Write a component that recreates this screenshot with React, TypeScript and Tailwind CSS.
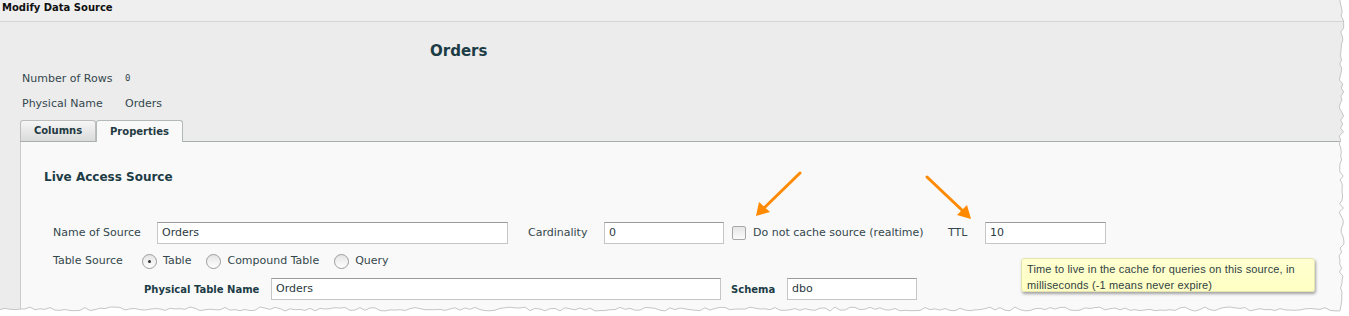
import React from 'react'

// deterministic jitter for the torn paper edge
function jitter(i: number) {
  const s = Math.sin(i * 12.9898 + 78.233) * 43758.5453
  return s - Math.floor(s)
}

function tornEdge() {
  const pts: string[] = []
  for (let y = 0; y <= 306; y += 4) {
    pts.push(`${(1341 + jitter(y) * 5 - 2).toFixed(1)},${y}`)
  }
  for (let x = 1340; x >= 0; x -= 5) {
    pts.push(`${x},${(308 + jitter(x + 900) * 4 - 1).toFixed(1)}`)
  }
  return pts
}

function TextInput({ value, className }: { value: string; className: string }) {
  return (
    <div
      className={`h-[22px] bg-white border border-[#c6c6c6] border-t-[#9a9a9a] pl-[4px] text-[11px] leading-[20px] text-[#2b3a3e] ${className}`}
    >
      {value}
    </div>
  )
}

function Radio({ checked, label }: { checked?: boolean; label: string }) {
  return (
    <div className="flex items-center">
      <span className="w-[15px] h-[15px] rounded-full border border-[#9c9c9c] bg-gradient-to-b from-[#e4e4e4] to-white flex items-center justify-center">
        {checked && <span className="w-[3px] h-[3px] rounded-full bg-[#333]" />}
      </span>
      <span className="ml-[6px]">{label}</span>
    </div>
  )
}

export default function App() {
  const edge = tornEdge()
  return (
    <div className="relative w-[1349px] h-[316px] bg-white overflow-hidden font-['DejaVu_Sans',sans-serif] text-[11px] text-[#34474c]">
      <div className="w-[1349px] h-[316px] bg-[#ececec] flex flex-col">
        {/* Title bar */}
        <div className="h-[22px] bg-[#efefef] border-b border-[#d5d5d5] pl-[2px] text-[10px] leading-[16px] font-bold text-[#111]">
          Modify Data Source
        </div>

        <div className="flex-1 pl-[20px] flex flex-col">
          <div className="ml-[410px] mt-[20px] text-[15px] leading-[18px] font-bold text-[#1c3c46]">Orders</div>

          <div className="mt-[12px] pl-[2px] flex flex-col gap-[12px] leading-[13px]">
            <div className="flex">
              <span className="w-[103px]">Number of Rows</span>
              <span className="font-['DejaVu_Sans_Mono',monospace] text-[9px]">0</span>
            </div>
            <div className="flex">
              <span className="w-[103px]">Physical Name</span>
              <span>Orders</span>
            </div>
          </div>

          {/* Tabs */}
          <div className="mt-[10px] flex items-end h-[22px] border-b border-[#a9afae] text-[10px]">
            <div className="w-[76px] h-[21px] rounded-t-[3px] border border-b-0 border-[#bdbdbd] bg-gradient-to-b from-[#f6f6f6] to-[#dadada] text-center font-bold leading-[20px] text-[#1f3a42]">
              Columns
            </div>
            <div className="w-[87px] h-[22px] -mb-px rounded-t-[3px] border border-b-0 border-[#b3b9b8] bg-[#f9f9f9] text-center font-bold leading-[22px] text-[#1f3a42]">
              Properties
            </div>
          </div>

          {/* Panel */}
          <div className="flex-1 bg-[#f9f9f9] border-l border-[#cccccc] pl-[23px] flex flex-col">
            <div className="mt-[27px] text-[12px] leading-[16px] font-bold text-[#1c3c46]">Live Access Source</div>

            <div className="mt-[37px] pl-[9px] flex items-center h-[22px]">
              <span className="w-[104px]">Name of Source</span>
              <TextInput value="Orders" className="w-[351px]" />
              <span className="ml-[20px] w-[76px]">Cardinality</span>
              <TextInput value="0" className="w-[120px]" />
              <span className="ml-[8px] w-[14px] h-[14px] border border-[#a8a8a8] rounded-[2px] bg-gradient-to-b from-[#e6e6e6] to-[#fbfbfb]" />
              <span className="ml-[7px] w-[195px]">Do not cache source (realtime)</span>
              <span className="w-[37px]">TTL</span>
              <TextInput value="10" className="w-[121px]" />
            </div>

            <div className="mt-[9px] pl-[9px] flex items-center h-[16px]">
              <span className="w-[89px]">Table Source</span>
              <div className="flex items-center gap-[15px]">
                <Radio checked label="Table" />
                <Radio label="Compound Table" />
                <Radio label="Query" />
              </div>
            </div>

            <div className="mt-[9px] pl-[100px] flex items-center h-[22px]">
              <span className="w-[127px] text-[10px] font-bold text-[#1c3c46]">Physical Table Name</span>
              <TextInput value="Orders" className="w-[450px]" />
              <span className="ml-[10px] w-[56px] text-[10px] font-bold text-[#1c3c46]">Schema</span>
              <TextInput value="dbo" className="w-[130px]" />
            </div>
          </div>
        </div>
      </div>

      {/* Tooltip */}
      <div className="absolute left-[1021px] top-[258px] w-[294px] h-[34px] rounded-[3px] border border-[#e4e4b0] bg-gradient-to-b from-[#ffffd0] to-[#ffffc4] shadow-[1px_2px_3px_rgba(0,0,0,0.35)] px-[5px] pt-[2px] font-['Liberation_Sans',sans-serif] text-[11px] tracking-[0.15px] leading-[16px] text-[#2f3f44]">
        Time to live in the cache for queries on this source, in milliseconds (-1 means never expire)
      </div>

      {/* Annotation arrows and torn paper edge */}
      <svg className="absolute inset-0 pointer-events-none" width="1349" height="316">
        <g stroke="#ff8a00" strokeWidth="3" strokeLinecap="round" fill="#ff8a00">
          <line x1="800" y1="173" x2="763" y2="209" />
          <polygon points="756,216 759,202 770,212" stroke="none" />
          <line x1="927" y1="177" x2="964" y2="212" />
          <polygon points="971,219 957,215 967,205" stroke="none" />
        </g>
        <path d={`M1349,0 L${edge.join(' L')} L0,316 L1349,316 Z`} fill="#ffffff" />
        <polyline points={edge.join(' ')} fill="none" stroke="#c6c6c6" strokeWidth="1" />
      </svg>
    </div>
  )
}
